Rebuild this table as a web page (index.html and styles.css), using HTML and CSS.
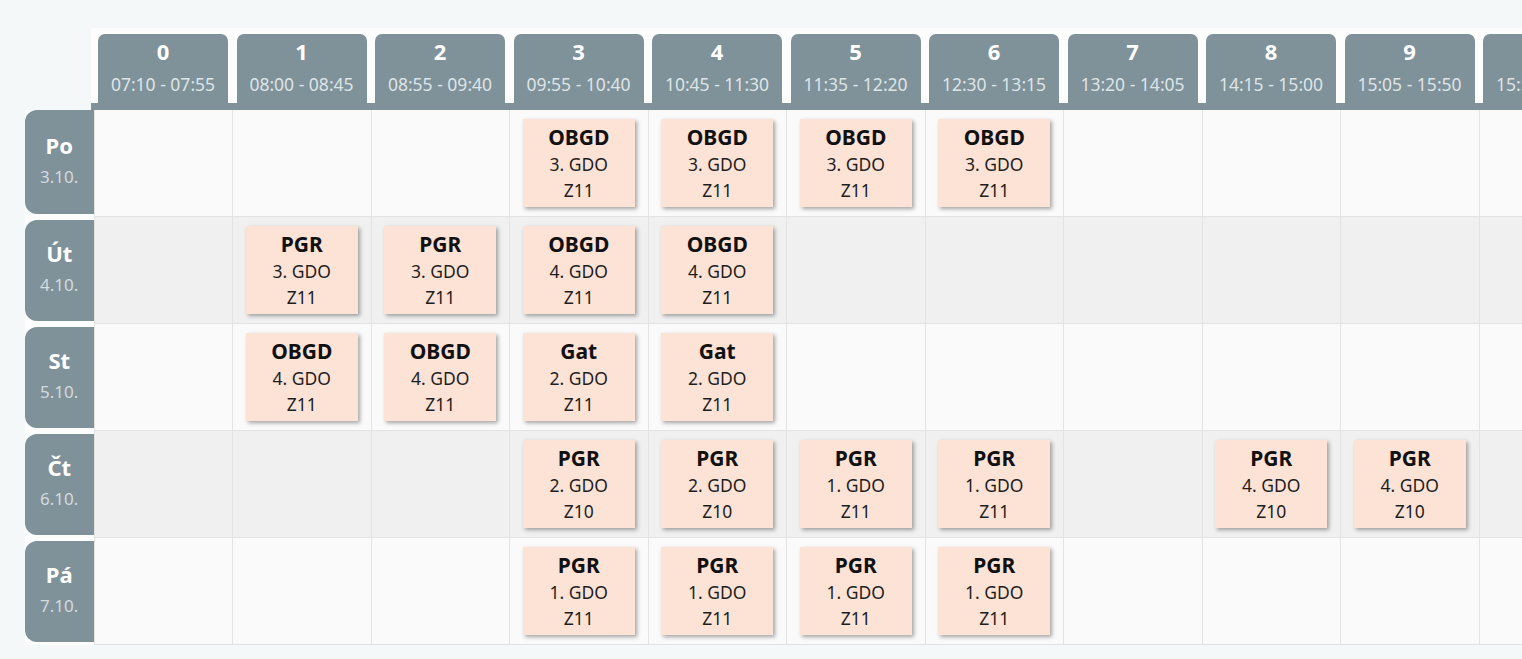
FILE: index.html
```html
<!DOCTYPE html>
<html lang="cs">
<head>
<meta charset="utf-8">
<title>Rozvrh</title>
<link rel="stylesheet" href="styles.css">
</head>
<body>
<div class="page">
  <div class="timetable">
    <div class="head">
      <div class="corner"></div>
      <div class="hours">
        <div class="hour"><div class="num">0</div><div class="time">07:10 - 07:55</div></div>
        <div class="hour"><div class="num">1</div><div class="time">08:00 - 08:45</div></div>
        <div class="hour"><div class="num">2</div><div class="time">08:55 - 09:40</div></div>
        <div class="hour"><div class="num">3</div><div class="time">09:55 - 10:40</div></div>
        <div class="hour"><div class="num">4</div><div class="time">10:45 - 11:30</div></div>
        <div class="hour"><div class="num">5</div><div class="time">11:35 - 12:20</div></div>
        <div class="hour"><div class="num">6</div><div class="time">12:30 - 13:15</div></div>
        <div class="hour"><div class="num">7</div><div class="time">13:20 - 14:05</div></div>
        <div class="hour"><div class="num">8</div><div class="time">14:15 - 15:00</div></div>
        <div class="hour"><div class="num">9</div><div class="time">15:05 - 15:50</div></div>
        <div class="hour"><div class="num">10</div><div class="time">15:55 - 16:40</div></div>
      </div>
    </div>

    <div class="row first">
      <div class="day"><div class="dname">Po</div><div class="ddate">3.10.</div></div>
      <div class="cell"></div>
      <div class="cell"></div>
      <div class="cell"></div>
      <div class="cell"><div class="card"><div class="subj">OBGD</div><div>3. GDO</div><div>Z11</div></div></div>
      <div class="cell"><div class="card"><div class="subj">OBGD</div><div>3. GDO</div><div>Z11</div></div></div>
      <div class="cell"><div class="card"><div class="subj">OBGD</div><div>3. GDO</div><div>Z11</div></div></div>
      <div class="cell"><div class="card"><div class="subj">OBGD</div><div>3. GDO</div><div>Z11</div></div></div>
      <div class="cell"></div>
      <div class="cell"></div>
      <div class="cell"></div>
      <div class="cell"></div>
    </div>

    <div class="row alt">
      <div class="day"><div class="dname">Út</div><div class="ddate">4.10.</div></div>
      <div class="cell"></div>
      <div class="cell"><div class="card"><div class="subj">PGR</div><div>3. GDO</div><div>Z11</div></div></div>
      <div class="cell"><div class="card"><div class="subj">PGR</div><div>3. GDO</div><div>Z11</div></div></div>
      <div class="cell"><div class="card"><div class="subj">OBGD</div><div>4. GDO</div><div>Z11</div></div></div>
      <div class="cell"><div class="card"><div class="subj">OBGD</div><div>4. GDO</div><div>Z11</div></div></div>
      <div class="cell"></div>
      <div class="cell"></div>
      <div class="cell"></div>
      <div class="cell"></div>
      <div class="cell"></div>
      <div class="cell"></div>
    </div>

    <div class="row">
      <div class="day"><div class="dname">St</div><div class="ddate">5.10.</div></div>
      <div class="cell"></div>
      <div class="cell"><div class="card"><div class="subj">OBGD</div><div>4. GDO</div><div>Z11</div></div></div>
      <div class="cell"><div class="card"><div class="subj">OBGD</div><div>4. GDO</div><div>Z11</div></div></div>
      <div class="cell"><div class="card"><div class="subj">Gat</div><div>2. GDO</div><div>Z11</div></div></div>
      <div class="cell"><div class="card"><div class="subj">Gat</div><div>2. GDO</div><div>Z11</div></div></div>
      <div class="cell"></div>
      <div class="cell"></div>
      <div class="cell"></div>
      <div class="cell"></div>
      <div class="cell"></div>
      <div class="cell"></div>
    </div>

    <div class="row alt">
      <div class="day"><div class="dname">Čt</div><div class="ddate">6.10.</div></div>
      <div class="cell"></div>
      <div class="cell"></div>
      <div class="cell"></div>
      <div class="cell"><div class="card"><div class="subj">PGR</div><div>2. GDO</div><div>Z10</div></div></div>
      <div class="cell"><div class="card"><div class="subj">PGR</div><div>2. GDO</div><div>Z10</div></div></div>
      <div class="cell"><div class="card"><div class="subj">PGR</div><div>1. GDO</div><div>Z11</div></div></div>
      <div class="cell"><div class="card"><div class="subj">PGR</div><div>1. GDO</div><div>Z11</div></div></div>
      <div class="cell"></div>
      <div class="cell"><div class="card"><div class="subj">PGR</div><div>4. GDO</div><div>Z10</div></div></div>
      <div class="cell"><div class="card"><div class="subj">PGR</div><div>4. GDO</div><div>Z10</div></div></div>
      <div class="cell"></div>
    </div>

    <div class="row">
      <div class="day"><div class="dname">Pá</div><div class="ddate">7.10.</div></div>
      <div class="cell"></div>
      <div class="cell"></div>
      <div class="cell"></div>
      <div class="cell"><div class="card"><div class="subj">PGR</div><div>1. GDO</div><div>Z11</div></div></div>
      <div class="cell"><div class="card"><div class="subj">PGR</div><div>1. GDO</div><div>Z11</div></div></div>
      <div class="cell"><div class="card"><div class="subj">PGR</div><div>1. GDO</div><div>Z11</div></div></div>
      <div class="cell"><div class="card"><div class="subj">PGR</div><div>1. GDO</div><div>Z11</div></div></div>
      <div class="cell"></div>
      <div class="cell"></div>
      <div class="cell"></div>
      <div class="cell"></div>
    </div>
  </div>
</div>
</body>
</html>
```

FILE: styles.css
```css
html, body {
  margin: 0;
  padding: 0;
  background: #f5f8f9;
  overflow: hidden;
}

.page {
  width: 1522px;
  height: 659px;
  overflow: hidden;
  font-family: "Noto Sans", "DejaVu Sans", sans-serif;
}

.timetable {
  margin: 28px 0 0 25px;
  width: max-content;
}

.head {
  display: flex;
}

.corner {
  width: 68.5px;
  flex: none;
}

.hours {
  display: grid;
  grid-template-columns: repeat(11, 138.5px);
  background: #fdfdfd;
  padding-top: 6px;
  border-bottom: 7px solid #7f9199;
  margin-left: -2.5px;
  padding-left: 2.5px;
}

.hour {
  margin: 0 4px 0 4.5px;
  height: 69px;
  background: #7f9199;
  border-radius: 7px 7px 0 0;
  color: #ffffff;
  text-align: center;
  white-space: nowrap;
  overflow: hidden;
}

.num {
  font-weight: 700;
  font-size: 22px;
  line-height: 28px;
  padding-top: 3px;
}

.time {
  font-size: 17.5px;
  line-height: 24px;
  margin-top: 7px;
  color: #dde4e7;
}

.row {
  display: grid;
  grid-template-columns: 68.5px repeat(11, 138.5px);
  background: #fdfdfd;
}

.day {
  margin: 3px 0 3px 0;
  padding-bottom: 3px;
  background: #7f9199;
  border-radius: 12px 0 0 12px;
  color: #ffffff;
  display: flex;
  flex-direction: column;
  justify-content: center;
  align-items: center;
}

.first .day {
  margin-top: 0;
}

.dname {
  font-weight: 700;
  font-size: 22px;
  line-height: 32px;
}

.ddate {
  font-size: 17px;
  line-height: 32px;
  color: #d3dbdf;
}

.cell {
  height: 106px;
  background: #fafafa;
  border-left: 1px solid #e3e3e3;
  border-bottom: 1px solid #e3e3e3;
  display: flex;
  align-items: center;
  justify-content: center;
}

.alt .cell {
  background: #f0f0f0;
}

.card {
  width: 112px;
  height: 88px;
  box-sizing: border-box;
  padding-top: 5px;
  background: #fde3d6;
  box-shadow: 2px 2px 4px rgba(0, 0, 0, 0.35);
  text-align: center;
  font-size: 17.5px;
  line-height: 27px;
  color: #1e1e1e;
}

.card div:nth-child(3) {
  margin-top: -1px;
}

.subj {
  font-weight: 700;
  font-size: 21px;
  color: #111111;
}
```
